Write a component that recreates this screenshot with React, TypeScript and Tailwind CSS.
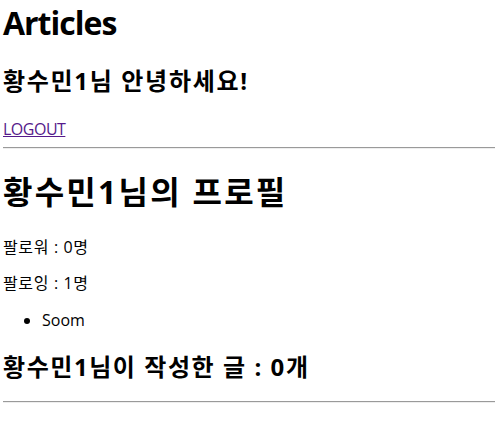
import React from "react";

const font = { fontFamily: '"Open Sans", "Noto Sans CJK KR", sans-serif' };

export default function App() {
  return (
    <div className="bg-white text-black w-[495px] h-[438px] overflow-hidden pl-[3px] pt-[3px]" style={font}>
      <h1 className="text-[32px] leading-[40px] font-bold tracking-[-1px]">Articles</h1>
      <h2 className="mt-[22px] text-[24px] leading-[32px] font-bold tracking-[0.07em]">황수민1님 안녕하세요!</h2>
      <a href="#" className="mt-[20px] block w-max text-[16px] leading-[24px] text-[#551A8B] underline tracking-[-0.5px]">LOGOUT</a>
      <div className="mt-[6px] h-[2px] border-t border-t-[#9a9a9a] border-b border-b-[#eeeeee]" />
      <h1 className="mt-[23px] text-[32px] leading-[40px] font-bold tracking-[0.07em]">황수민1님의 프로필</h1>
      <p className="mt-[23px] text-[16px] leading-[24px] tracking-[0.04em]">팔로워 : 0명</p>
      <p className="mt-[12px] text-[16px] leading-[24px] tracking-[0.04em]">팔로잉 : 1명</p>
      <ul className="mt-[13px] pl-[39px] list-disc text-[16px] leading-[24px]">
        <li>Soom</li>
      </ul>
      <h3 className="mt-[19px] text-[24px] leading-[32px] font-bold tracking-[0.065em]">황수민1님이 작성한 글 : 0개</h3>
      <div className="mt-[18px] h-[2px] border-t border-t-[#9a9a9a] border-b border-b-[#eeeeee]" />
    </div>
  );
}
